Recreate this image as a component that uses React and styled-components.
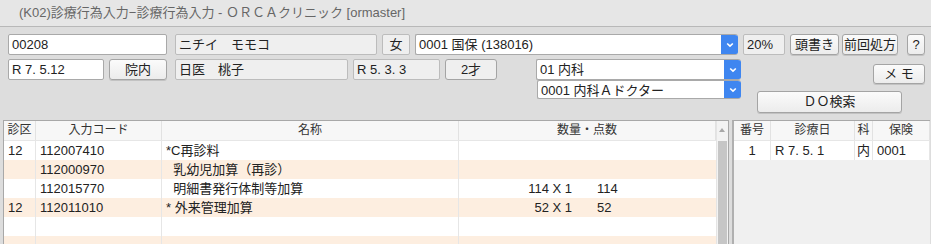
import React from "react";
import styled, { createGlobalStyle } from "styled-components";

const GlobalStyle = createGlobalStyle`
  html, body {
    margin: 0;
    padding: 0;
    background: #dddddd;
    font-family: "Liberation Sans", "Noto Sans CJK JP", sans-serif;
    font-size: 13px;
    color: #222;
  }
`;

const orders = [
  { ku: "12", code: "112007410", name: "*C再診料", qty: "", pts: "" },
  { ku: "", code: "112000970", name: "  乳幼児加算（再診）", qty: "", pts: "" },
  { ku: "", code: "112015770", name: "  明細書発行体制等加算", qty: "114 X 1", pts: "114" },
  { ku: "12", code: "112011010", name: "* 外来管理加算", qty: "52 X 1", pts: "52" },
  { ku: "", code: "", name: "", qty: "", pts: "" },
  { ku: "", code: "", name: "", qty: "", pts: "" },
];

const App = () => {
  return (
    <>
      <GlobalStyle />
      <Window>
        <TitleBar>(K02)診療行為入力−診療行為入力 - ＯＲＣＡクリニック [ormaster]</TitleBar>

        <Form>
          <Row>
            <Field $w={159}>00208</Field>
            <Field $w={202} $ml={8} $ro>ニチイ　モモコ</Field>
            <Field $w={28} $ml={5} $ro $center>女</Field>
            <Combo $w={323} $ml={5}>
              <ComboText>0001 国保 (138016)</ComboText>
              <Chevron />
            </Combo>
            <Field $w={42} $ml={5} $ro>20%</Field>
            <Button $w={49} $ml={5}>頭書き</Button>
            <Button $w={56} $ml={3}>前回処方</Button>
            <Button $w={18} $ml={9}>?</Button>
          </Row>

          <Lower>
            <Row>
              <Field $w={96}>R 7. 5.12</Field>
              <Button $w={58} $ml={5} $h={21}>院内</Button>
              <Field $w={173} $ml={8} $ro>日医　桃子</Field>
              <Field $w={87} $ml={5} $ro>R 5. 3. 3</Field>
              <Button $w={52} $ml={5} $h={21} $flat>2才</Button>
            </Row>

            <DeptColumn>
              <Combo $w={205}>
                <ComboText>01 内科</ComboText>
                <Chevron />
              </Combo>
              <Combo $w={204} $ml={1} $h={19}>
                <ComboText>0001 内科Ａドクター</ComboText>
                <Chevron />
              </Combo>
            </DeptColumn>

            <SideColumn>
              <Button $w={52} $h={20} $self="flex-end">メ モ</Button>
              <Button $w={145} $h={22} $mt={7}>ＤＯ検索</Button>
            </SideColumn>
          </Lower>
        </Form>

        <Tables>
          <OrderPanel>
            <TableBody>
              <HeadRow>
                <HeadCell $w={32}>診区</HeadCell>
                <HeadCell $w={126}>入力コード</HeadCell>
                <HeadCell $w={297}>名称</HeadCell>
                <HeadCell $w={257}>数量・点数</HeadCell>
              </HeadRow>
              {orders.map((o, i) => (
                <BodyRow key={i} $alt={i % 2 === 1}>
                  <Cell $w={32}>{o.ku}</Cell>
                  <Cell $w={126}>{o.code}</Cell>
                  <Cell $w={297} $pre>{o.name}</Cell>
                  <QtyCell $w={257}>
                    <Qty>{o.qty}</Qty>
                    <Pts>{o.pts}</Pts>
                  </QtyCell>
                </BodyRow>
              ))}
            </TableBody>
            <ScrollBar>
              <ScrollArrow />
              <ScrollThumb />
            </ScrollBar>
          </OrderPanel>

          <HistoryPanel>
            <HeadRow>
              <HeadCell $w={37}>番号</HeadCell>
              <HeadCell $w={84}>診療日</HeadCell>
              <HeadCell $w={18}>科</HeadCell>
              <HeadCell $w={57}>保険</HeadCell>
            </HeadRow>
            <BodyRow>
              <Cell $w={37} $center>1</Cell>
              <Cell $w={84}>R 7. 5. 1</Cell>
              <Cell $w={18} $tight>内</Cell>
              <Cell $w={57}>0001</Cell>
            </BodyRow>
          </HistoryPanel>
        </Tables>
      </Window>
    </>
  );
};

const Chevron = () => (
  <ChevronBox>
    <svg width="8" height="6" viewBox="0 0 8 6">
      <path d="M1.2 1.5 L4 4.2 L6.8 1.5" fill="none" stroke="#fff" strokeWidth="1.6" />
    </svg>
  </ChevronBox>
);

export default App;

const Window = styled.div`
  width: 931px;
  height: 244px;
  overflow: hidden;
  background: #dddddd;
`;

const TitleBar = styled.div`
  height: 26px;
  line-height: 26px;
  padding-left: 19px;
  background: #e6e6e6;
  border-bottom: 1px solid #b8b8b8;
  color: #666;
  font-size: 13px;
  white-space: nowrap;
`;

const Form = styled.div`
  display: flex;
  flex-direction: column;
  padding: 7px 0 0 8px;
  height: 86px;
`;

const Row = styled.div`
  display: flex;
  align-items: flex-start;
`;

const Lower = styled.div`
  display: flex;
  align-items: flex-start;
  margin-top: 4px;
`;

const Field = styled.div`
  box-sizing: border-box;
  width: ${(p) => p.$w}px;
  height: ${(p) => p.$h || 21}px;
  margin-left: ${(p) => p.$ml || 0}px;
  padding: 0 3px;
  line-height: 19px;
  background: ${(p) => (p.$ro ? "#efefef" : "#ffffff")};
  border: 1px solid ${(p) => (p.$ro ? "#bcbcbc" : "#a9a9a9")};
  border-radius: 2px;
  text-align: ${(p) => (p.$center ? "center" : "left")};
  white-space: nowrap;
  overflow: hidden;
`;

const Combo = styled.div`
  box-sizing: border-box;
  display: flex;
  width: ${(p) => p.$w}px;
  height: ${(p) => p.$h || 21}px;
  margin-left: ${(p) => p.$ml || 0}px;
  background: #ffffff;
  border: 1px solid #a9a9a9;
  border-right: none;
  border-radius: 2px 3px 3px 2px;
  overflow: hidden;
`;

const ComboText = styled.div`
  flex: 1;
  padding: 0 3px;
  line-height: 19px;
  white-space: nowrap;
  overflow: hidden;
`;

const ChevronBox = styled.div`
  width: 17px;
  display: flex;
  align-items: center;
  justify-content: center;
  background: #3f86f0;
  margin: -1px 0;
`;

const Button = styled.div`
  box-sizing: border-box;
  width: ${(p) => p.$w}px;
  height: ${(p) => p.$h || 21}px;
  margin-left: ${(p) => p.$ml || 0}px;
  margin-top: ${(p) => p.$mt || 0}px;
  align-self: ${(p) => p.$self || "auto"};
  line-height: ${(p) => (p.$h || 21) - 2}px;
  text-align: center;
  background: ${(p) => (p.$flat ? "#efefef" : "linear-gradient(#fbfbfb, #ececec)")};
  border: 1px solid #a4a4a4;
  border-radius: 3px;
  box-shadow: ${(p) => (p.$flat ? "none" : "0 1px 0 rgba(0, 0, 0, 0.12)")};
  color: #222;
  white-space: nowrap;
`;

const DeptColumn = styled.div`
  display: flex;
  flex-direction: column;
  margin-left: 39px;
`;

const SideColumn = styled.div`
  display: flex;
  flex-direction: column;
  width: 168px;
  margin-left: 16px;
  padding-top: 5px;
`;

const Tables = styled.div`
  display: flex;
  padding-left: 3px;
  margin-top: 0px;
  height: 140px;
`;

const OrderPanel = styled.div`
  display: flex;
  width: 724px;
  border: 1px solid #a8a8a8;
  border-bottom: none;
  background: #ffffff;
`;

const TableBody = styled.div`
  flex: 1;
  display: flex;
  flex-direction: column;
`;

const HeadRow = styled.div`
  display: flex;
  height: 19px;
  background: #f7f7f7;
  border-bottom: 1px solid #e6e6e6;
`;

const HeadCell = styled.div`
  box-sizing: border-box;
  width: ${(p) => p.$w}px;
  line-height: 19px;
  text-align: center;
  font-size: 12px;
  color: #333;
  border-right: 1px solid #e2e2e2;
  white-space: nowrap;
`;

const BodyRow = styled.div`
  display: flex;
  height: 19px;
  background: ${(p) => (p.$alt ? "#fdeee0" : "#ffffff")};
`;

const Cell = styled.div`
  box-sizing: border-box;
  width: ${(p) => p.$w}px;
  padding: ${(p) => (p.$tight ? "0 2px" : "0 4px")};
  line-height: 19px;
  text-align: ${(p) => (p.$center ? "center" : "left")};
  border-right: 1px solid #e6e6e6;
  white-space: ${(p) => (p.$pre ? "pre" : "nowrap")};
  overflow: hidden;
`;

const QtyCell = styled.div`
  box-sizing: border-box;
  display: flex;
  width: ${(p) => p.$w}px;
  line-height: 19px;
`;

const Qty = styled.div`
  width: 113px;
  text-align: right;
  white-space: nowrap;
`;

const Pts = styled.div`
  margin-left: 25px;
  white-space: nowrap;
`;

const ScrollBar = styled.div`
  position: relative;
  width: 11px;
  background: #f3f3f3;
  border-left: 1px solid #e4e4e4;
`;

const ScrollArrow = styled.div`
  position: absolute;
  top: 7px;
  left: 2px;
  width: 0;
  height: 0;
  border-left: 3.5px solid transparent;
  border-right: 3.5px solid transparent;
  border-bottom: 4px solid #a8a8a8;
`;

const ScrollThumb = styled.div`
  position: absolute;
  top: 20px;
  left: 1px;
  width: 9px;
  bottom: 0;
  background: #c6c6c6;
`;

const HistoryPanel = styled.div`
  width: 196px;
  margin-left: 3px;
  border-left: 2px solid #b0b0b0;
  border-top: 1px solid #a8a8a8;
  background: #f0f0f0;
`;
